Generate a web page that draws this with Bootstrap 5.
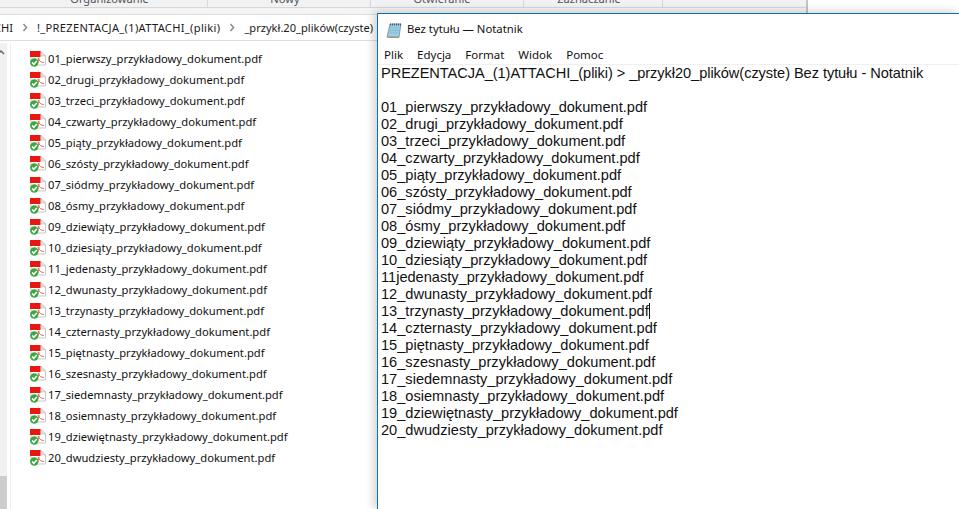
<!DOCTYPE html>
<html lang="pl">
<head>
<meta charset="utf-8">
<title>Notatnik</title>
<link href="https://cdn.jsdelivr.net/npm/bootstrap@5.3.0/dist/css/bootstrap.min.css" rel="stylesheet">
<style>
html,body{height:509px;overflow:hidden;background:#fff}
body{font-family:"Noto Sans",sans-serif;position:relative;width:959px}
.explorer{width:808px;height:509px;background:#fff;border-right:2px solid #c4c4c4}
.ribbon{height:8px;background:#f1f2f3;border-bottom:1px solid #d6d7d8;font-size:11.100px;color:#555;overflow:hidden}
.rib-group{height:7px;border-right:1px solid #d6d7d8;line-height:1;display:flex;justify-content:center}
.rib-group span{margin-top:-7px;display:block}
.g1{width:208px;padding-left:12px}.g2{width:163px;padding-right:8px}.g3{width:153px;padding-right:10px}.g4{width:139px;padding-right:8px}
.strip{height:6px;background:#f5f5f5}
.crumbs{height:27px;border-top:1px solid #dedede;border-bottom:1px solid #dedede;font-size:11.100px;color:#1a1a1a;white-space:nowrap;overflow:hidden;line-height:24px;margin-bottom:2px;padding-top:1px}
.cut{margin-left:-6px}
.sepa{display:inline-block;margin:0 8px 0 9px;vertical-align:0}
.wide-path{letter-spacing:.33px}
.panes{height:466px}
.sidebar{width:11px;position:relative;background:#fff;border-right:1px solid #eee}
.track{position:absolute;left:0;top:0;width:7px;height:466px;background:#f1f1f1}
.thumbfill{position:absolute;left:0;bottom:0;width:7px;height:33px;background:#cdcdcd}
.arrowup{position:absolute;left:-3px;top:6px}
.files{padding:5px 0 0 19px}
.file{height:21px;font-size:11.200px;color:#111;line-height:21px;gap:2px}
.ficon{width:16px;height:16px;flex:none}
.notepad{position:absolute;left:377px;top:13px;width:582px;height:496px;background:#fff;border-left:1px solid #0d73b8;border-top:1px solid #0d6ea8;box-shadow:-3px -1px 9px rgba(0,0,0,.2)}
.titlebar{height:31px;font-size:11.300px;color:#111;padding-left:8px;gap:5px}
.menubar{height:20px;font-size:11.500px;color:#111;padding-left:6px;gap:14px;border-bottom:1px solid #f0f0f0}
.editor{font-family:"Liberation Sans",Arial,sans-serif;font-size:14.600px;line-height:17px;color:#111;padding:0 0 0 3px;white-space:pre;margin:0;overflow:hidden}
.head-line{letter-spacing:-.06px}
.caret{display:inline-block;width:1px;height:16px;background:#111;vertical-align:-3px}
</style>
</head>
<body>
<div class="explorer">
  <div class="ribbon d-flex align-items-start">
    <div class="rib-group g1"><span>Organizowanie</span></div>
    <div class="rib-group g2"><span>Nowy</span></div>
    <div class="rib-group g3"><span>Otwieranie</span></div>
    <div class="rib-group g4"><span>Zaznaczanie</span></div>
  </div>
  <div class="strip"></div>
  <div class="crumbs"><span class="cut">CHI</span><svg class="sepa" width="7" height="9" viewBox="0 0 7 9"><path d="M1.500 1l3 3.500-3 3.500" fill="none" stroke="#8a8a8a" stroke-width="1.500"/></svg><span class="wide-path">!_PREZENTACJA_(1)ATTACHI_(pliki)</span><svg class="sepa" width="7" height="9" viewBox="0 0 7 9"><path d="M1.500 1l3 3.500-3 3.500" fill="none" stroke="#8a8a8a" stroke-width="1.500"/></svg><span>_przykł.20_plików(czyste)</span></div>
  <div class="panes d-flex">
    <div class="sidebar"><div class="track"><svg class="arrowup" width="8" height="6" viewBox="0 0 8 6"><path d="M1 5l3-3 3 3" fill="none" stroke="#666" stroke-width="1.500"/></svg><div class="thumbfill"></div></div></div>
    <div class="files flex-grow-1" id="files"></div>
  </div>
</div>
<div class="notepad">
  <div class="titlebar d-flex align-items-center">
    <svg width="16" height="16" viewBox="0 0 16 16"><path d="M4 2h11l-2 13H1z" fill="#9bcde6" stroke="#5f7f92" stroke-width=".7"/><path d="M2 15h11l.6-3-.6 4H1.500z" fill="#a49a6a"/><path d="M4 2.500h11" stroke="#4d5f6b" stroke-width="2" stroke-dasharray="1 1"/><path d="M4 6h8.500M3.600 8.500h8.500M3.200 11h8.500" stroke="#7db4d2" stroke-width=".8"/></svg>
    <span>Bez tytułu — Notatnik</span>
  </div>
  <div class="menubar d-flex align-items-center"><span>Plik</span><span>Edycja</span><span>Format</span><span>Widok</span><span>Pomoc</span></div>
  <pre class="editor" id="ed"></pre>
</div>
<script>
var a=["01_pierwszy","02_drugi","03_trzeci","04_czwarty","05_piąty","06_szósty","07_siódmy","08_ósmy","09_dziewiąty","10_dziesiąty","11_jedenasty","12_dwunasty","13_trzynasty","14_czternasty","15_piętnasty","16_szesnasty","17_siedemnasty","18_osiemnasty","19_dziewiętnasty","20_dwudziesty"];
var s="_przykładowy_dokument.pdf";
var icon='<svg class="ficon" viewBox="0 0 16 16"><path d="M1 .5h10l4.500 4.500v9H1z" fill="#fff" stroke="#c9c9c9"/><path d="M11 .5l4.500 4.500H11z" fill="#e4e4e4" stroke="#bdbdbd" stroke-width=".6"/><rect x="0" y="0" width="10.500" height="6" fill="#e8170f"/><path d="M8 7c1 3 3 4.500 6 4.500M9 7c0 3-1 4-2 6" fill="none" stroke="#e8574f" stroke-width=".9"/><circle cx="4.300" cy="11.500" r="4.200" fill="#3da641"/><path d="M2.100 11.500l1.700 1.800 3-3.300" fill="none" stroke="#fff" stroke-width="1.500"/></svg>';
document.getElementById("files").innerHTML=a.map(function(n){return '<div class="file d-flex align-items-center">'+icon+'<span>'+n+s+'</span></div>'}).join("");
var ed=a.map(function(n,i){var t=(i==10?"11jedenasty":n)+s;return i==12?t+'<span class="caret"></span>':t}).join("\n");
document.getElementById("ed").innerHTML='<span class="head-line">PREZENTACJA_(1)ATTACHI_(pliki) &gt; _przykł20_plików(czyste) Bez tytułu - Notatnik</span>\n\n'+ed;
</script>
<script src="https://cdn.jsdelivr.net/npm/bootstrap@5.3.0/dist/js/bootstrap.bundle.min.js"></script>
</body>
</html>
